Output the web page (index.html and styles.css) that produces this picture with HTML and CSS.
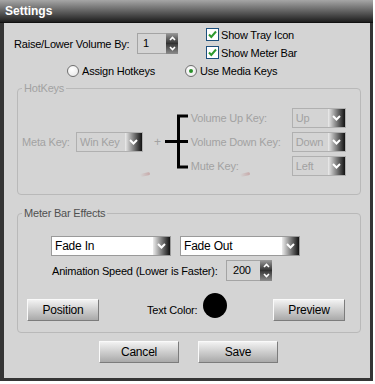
FILE: index.html
```html
<!DOCTYPE html>
<html lang="en">
<head>
  <meta charset="UTF-8">
  <title>Settings</title>
  <link rel="stylesheet" href="styles.css">
</head>
<body>
  <div class="window">
    <div class="titlebar">Settings</div>
    <div class="body">
      <div class="top-row">
        <div class="volume">
          <span class="volume-label">Raise/Lower Volume By:</span>
          <div class="spin">
            <div class="spin-value">1</div>
            <div class="spin-btns">
              <span class="spin-up"><svg width="7" height="5" viewBox="0 0 7 5"><path d="M1 4L3.5 1.5L6 4" stroke="#fff" stroke-width="1.6" fill="none"/></svg></span>
              <span class="spin-down"><svg width="7" height="5" viewBox="0 0 7 5"><path d="M1 1L3.5 3.5L6 1" stroke="#fff" stroke-width="1.6" fill="none"/></svg></span>
            </div>
          </div>
        </div>
        <div class="checks">
          <div class="check">
            <span class="box"><svg width="11" height="11" viewBox="0 0 11 11"><path d="M2 5.5L4.3 8L9 2.5" stroke="#2e9a2e" stroke-width="2" fill="none"/></svg></span>
            Show Tray Icon
          </div>
          <div class="check">
            <span class="box"><svg width="11" height="11" viewBox="0 0 11 11"><path d="M2 5.5L4.3 8L9 2.5" stroke="#2e9a2e" stroke-width="2" fill="none"/></svg></span>
            Show Meter Bar
          </div>
        </div>
      </div>

      <div class="mode-row">
        <div class="radio radio-first"><span class="circle"></span>Assign Hotkeys</div>
        <div class="radio"><span class="circle checked"></span>Use Media Keys</div>
      </div>

      <div class="group hotkeys">
        <span class="group-title disabled">HotKeys</span>
        <div class="meta-label disabled">Meta Key:</div>
        <div class="select select-off meta-select">
          <span class="select-text">Win Key</span>
          <span class="select-btn"><svg width="9" height="6" viewBox="0 0 9 6"><path d="M1 1L4.5 4.5L8 1" stroke="#fff" stroke-width="2" fill="none"/></svg></span>
        </div>
        <span class="plus disabled">+</span>
        <svg class="bracket" width="24" height="57" viewBox="0 0 24 57">
          <path d="M13.5 1.5V55.5M12 3H23M12 54H23M0 28.5H23" stroke="#000" stroke-width="3" fill="none"/>
        </svg>
        <div class="key-list">
          <div class="key-row">
            <span class="disabled">Volume Up Key:</span>
            <div class="select select-off key-select">
              <span class="select-text">Up</span>
              <span class="select-btn"><svg width="9" height="6" viewBox="0 0 9 6"><path d="M1 1L4.5 4.5L8 1" stroke="#fff" stroke-width="2" fill="none"/></svg></span>
            </div>
          </div>
          <div class="key-row">
            <span class="disabled">Volume Down Key:</span>
            <div class="select select-off key-select">
              <span class="select-text">Down</span>
              <span class="select-btn"><svg width="9" height="6" viewBox="0 0 9 6"><path d="M1 1L4.5 4.5L8 1" stroke="#fff" stroke-width="2" fill="none"/></svg></span>
            </div>
          </div>
          <div class="key-row">
            <span class="disabled">Mute Key:</span>
            <div class="select select-off key-select">
              <span class="select-text">Left</span>
              <span class="select-btn"><svg width="9" height="6" viewBox="0 0 9 6"><path d="M1 1L4.5 4.5L8 1" stroke="#fff" stroke-width="2" fill="none"/></svg></span>
            </div>
          </div>
        </div>
        <!-- faint leftover marks under the hotkey controls -->
        <span class="mark mark-left"></span>
        <span class="mark mark-right"></span>
      </div>

      <div class="group effects">
        <span class="group-title">Meter Bar Effects</span>
        <div class="fade-row">
          <div class="select fade-select">
            <span class="select-text">Fade In</span>
            <span class="select-btn"><svg width="9" height="6" viewBox="0 0 9 6"><path d="M1 1L4.5 4.5L8 1" stroke="#fff" stroke-width="2" fill="none"/></svg></span>
          </div>
          <div class="select fade-select">
            <span class="select-text">Fade Out</span>
            <span class="select-btn"><svg width="9" height="6" viewBox="0 0 9 6"><path d="M1 1L4.5 4.5L8 1" stroke="#fff" stroke-width="2" fill="none"/></svg></span>
          </div>
        </div>
        <div class="speed-row">
          <span class="speed-label">Animation Speed (Lower is Faster):</span>
          <div class="spin">
            <div class="spin-value speed-value">200</div>
            <div class="spin-btns">
              <span class="spin-up"><svg width="7" height="5" viewBox="0 0 7 5"><path d="M1 4L3.5 1.5L6 4" stroke="#fff" stroke-width="1.6" fill="none"/></svg></span>
              <span class="spin-down"><svg width="7" height="5" viewBox="0 0 7 5"><path d="M1 1L3.5 3.5L6 1" stroke="#fff" stroke-width="1.6" fill="none"/></svg></span>
            </div>
          </div>
        </div>
        <div class="effects-bottom">
          <button class="btn btn-small">Position</button>
          <span class="color-label">Text Color:</span>
          <span class="color-dot"></span>
          <button class="btn btn-small btn-right">Preview</button>
        </div>
      </div>

      <div class="actions">
        <button class="btn btn-wide">Cancel</button>
        <button class="btn btn-wide">Save</button>
      </div>
    </div>
  </div>
</body>
</html>
```

FILE: styles.css
```css
* {
  box-sizing: border-box;
}
body {
  margin: 0;
  background: #fff;
  font-family: "Liberation Sans", Arial, sans-serif;
  font-size: 11px;
  letter-spacing: -0.2px;
  color: #000;
}
.window {
  width: 373px;
  height: 381px;
  display: flex;
  flex-direction: column;
}
.titlebar {
  height: 23px;
  padding: 4px 0 0 5px;
  background: linear-gradient(#a6a6a6, #1e1e1e);
  border-bottom: 1px solid #111;
  color: #fff;
  font-weight: bold;
  font-size: 12px;
  letter-spacing: 0;
}
.body {
  flex: 1;
  display: flex;
  flex-direction: column;
  background: #d4d4d4;
  border: solid #353535;
  border-width: 0 3px 3px 4px;
}
.disabled {
  color: #a2a2a2;
}

/* top row */
.top-row {
  display: flex;
  padding: 5px 0 0 10px;
}
.volume {
  width: 192px;
  display: flex;
  align-items: center;
}
.volume-label {
  width: 123px;
}
.spin {
  display: flex;
  height: 21px;
}
.spin-value {
  width: 29px;
  padding: 3px 0 0 5px;
  background: #d4d4d4;
  border: 1px solid #a4a4a4;
  border-right: none;
}
.speed-value {
  width: 34px;
  padding-left: 6px;
}
.spin-btns {
  width: 12px;
  display: flex;
  flex-direction: column;
}
.spin-btns span {
  flex: 1;
  display: flex;
  align-items: center;
  justify-content: center;
}
.spin-up {
  background: linear-gradient(#9c9c9c, #2c2c2c);
}
.spin-down {
  background: linear-gradient(#3a3a3a, #8c8c8c);
}
.checks {
  display: flex;
  flex-direction: column;
  gap: 5px;
}
.check {
  display: flex;
  align-items: center;
  gap: 2px;
  height: 13px;
}
.box {
  width: 13px;
  height: 13px;
  display: flex;
  align-items: center;
  justify-content: center;
  background: #fff;
  border: 1px solid #1c4f7c;
}

/* radios */
.mode-row {
  display: flex;
  margin-top: 6px;
  padding-left: 63px;
  height: 12px;
}
.radio {
  display: flex;
  align-items: center;
  gap: 3px;
}
.radio-first {
  width: 118px;
}
.circle {
  width: 12px;
  height: 12px;
  border-radius: 50%;
  border: 1px solid #6f6f6f;
  background: radial-gradient(circle at 40% 35%, #fff, #e4e4e4);
  display: flex;
  align-items: center;
  justify-content: center;
}
.circle.checked::after {
  content: "";
  width: 4px;
  height: 4px;
  border-radius: 50%;
  background: #2a8f2a;
}

/* group boxes */
.group {
  position: relative;
  margin: 11px 9px 0 13px;
  border: 1px solid #b9b9b9;
  border-radius: 4px;
}
.group-title {
  position: absolute;
  top: -7px;
  left: 4px;
  padding: 0 2px;
  background: #d4d4d4;
  color: #505050;
  line-height: 13px;
}
.group-title.disabled {
  color: #a2a2a2;
}
.hotkeys {
  height: 107px;
  display: flex;
  align-items: center;
  padding-left: 4px;
}
.meta-label {
  width: 54px;
}
.select {
  display: flex;
  height: 20px;
  border: 1px solid #9a9a9a;
  background: #fff;
}
.select-off {
  background: #d4d4d4;
  border-color: #b0b0b0;
  color: #a2a2a2;
}
.select-text {
  flex: 1;
  padding: 3px 0 0 3px;
}
.select-btn {
  width: 17px;
  display: flex;
  align-items: center;
  justify-content: center;
  background: linear-gradient(to right, #ececec, #8a8a8a 45%, #111);
}
.meta-select {
  width: 67px;
}
.plus {
  margin: 0 4px 0 11px;
  font-size: 12px;
}
.bracket {
  flex: none;
}
.key-list {
  width: 155px;
  margin-left: 2px;
  display: flex;
  flex-direction: column;
  gap: 4px;
}
.key-row {
  display: flex;
  align-items: center;
  justify-content: space-between;
}
.key-select {
  width: 54px;
}
.mark {
  position: absolute;
  top: 84px;
  width: 10px;
  height: 3px;
  border-radius: 2px;
  background: linear-gradient(to right, rgba(200, 150, 150, 0), rgba(190, 140, 140, 0.6));
  transform: rotate(-12deg);
}
.mark-left {
  left: 122px;
}
.mark-right {
  left: 222px;
}

/* meter bar effects */
.effects {
  margin-top: 18px;
  height: 120px;
  padding-top: 22px;
}
.fade-row {
  display: flex;
  gap: 9px;
  padding-left: 33px;
}
.fade-select {
  width: 120px;
}
.fade-select .select-text {
  font-size: 12px;
  padding: 2px 0 0 3px;
}
.speed-row {
  display: flex;
  align-items: center;
  margin-top: 4px;
  padding-left: 34px;
}
.speed-label {
  width: 174px;
}
.effects-bottom {
  display: flex;
  align-items: center;
  margin-top: 12px;
  padding: 0 15px 0 9px;
}
.color-label {
  margin-left: 48px;
}
.color-dot {
  width: 24px;
  height: 25px;
  margin: 0 0 8px 6px;
  border-radius: 50%;
  background: #000;
}
.btn-right {
  margin-left: auto;
}

/* buttons */
.btn {
  height: 22px;
  padding: 0;
  font-family: inherit;
  font-size: 12px;
  letter-spacing: -0.2px;
  color: #000;
  background: linear-gradient(#f2f2f2, #a9a9a9);
  border: 1px solid;
  border-color: #fafafa #7c7c7c #7c7c7c #fafafa;
}
.btn-small {
  width: 72px;
}
.btn-wide {
  width: 80px;
}
.actions {
  display: flex;
  gap: 19px;
  margin-top: 8px;
  padding-left: 95px;
}
```
